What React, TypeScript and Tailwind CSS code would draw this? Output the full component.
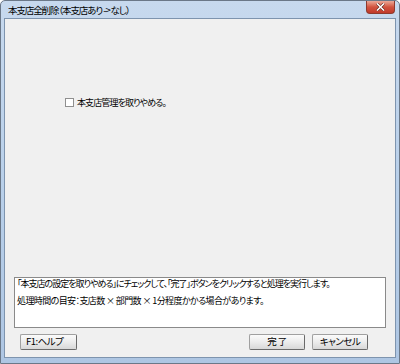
import React from "react";

const jp = { fontFamily: '"Noto Sans CJK JP", "Noto Sans", sans-serif', fontFeatureSettings: '"palt"' } as React.CSSProperties;

function Btn({ children, className = "" }: { children: React.ReactNode; className?: string }) {
  return (
    <div
      className={`h-[16px] flex items-center border border-[#a0a0a0] border-r-[#6a6a6a] border-b-[#6a6a6a] rounded-[2px] bg-gradient-to-b from-[#fbfbfb] via-[#ececec] to-[#d8d8d8] text-[9.5px] tracking-[-0.5px] text-black leading-none ${className}`}
    >
      {children}
    </div>
  );
}

export default function App() {
  return (
    <div className="w-[400px] h-[364px] bg-white" style={jp}>
      <div className="w-[400px] h-[364px] border border-[#6b7888] rounded-t-[5px] bg-gradient-to-b from-[#c7d9ee] via-[#b9d0ea] to-[#aec6e3] flex flex-col px-[3px] pb-[5px]">
        <div className="h-[17px] flex items-start justify-between">
          <div className="text-[9.5px] tracking-[-1.1px] leading-none text-black pl-[4px] pt-[5px] whitespace-nowrap">本支店全削除（本支店あり -&gt; なし）</div>
          <div className="w-[29px] h-[13px] mr-[1px] rounded-b-[4px] border border-[#8e3a2e] border-t-0 bg-gradient-to-b from-[#eaa898] via-[#d2533f] to-[#c0392b] flex items-center justify-center">
            <svg width="9" height="8" viewBox="0 0 9 8">
              <path d="M1 0.5 L8 7.5 M8 0.5 L1 7.5" stroke="#5a1f17" strokeWidth="2.6" />
              <path d="M1 0.5 L8 7.5 M8 0.5 L1 7.5" stroke="#ffffff" strokeWidth="1.6" />
            </svg>
          </div>
        </div>
        <div className="flex-1 border border-[#7e94ae] bg-[#f0f0f0] flex flex-col">
          <div className="h-[78px]" />
          <div className="flex items-center pl-[60px] h-[10px]">
            <div className="w-[9px] h-[9px] border border-[#8f8f8f] bg-white" />
            <div className="ml-[3px] text-[9px] tracking-[-0.9px] leading-none text-black whitespace-nowrap">本支店管理を取りやめる。</div>
          </div>
          <div className="flex-1" />
          <div className="mx-[9px] h-[51px] border border-[#8a8a8a] bg-white px-[2px] text-[9px] text-black leading-none">
            <div className="h-[10px] flex items-center whitespace-nowrap tracking-[-1px]">「本支店の設定を取りやめる」にチェックして、「完了」ボタンをクリックすると処理を実行します。</div>
            <div className="h-[7px]" />
            <div className="h-[10px] flex items-center whitespace-nowrap tracking-[-0.6px]">処理時間の目安：支店数 × 部門数 × 1分程度かかる場合があります。</div>
          </div>
          <div className="h-[6px]" />
          <div className="flex items-center pl-[15px] pr-[27px] h-[16px]">
            <Btn className="w-[57px] pl-[5px]">F1:ヘルプ</Btn>
            <div className="flex-1" />
            <Btn className="w-[56px] justify-center">完 了</Btn>
            <div className="w-[7px]" />
            <Btn className="w-[56px] justify-center">キャンセル</Btn>
          </div>
          <div className="h-[7px]" />
        </div>
      </div>
    </div>
  );
}
